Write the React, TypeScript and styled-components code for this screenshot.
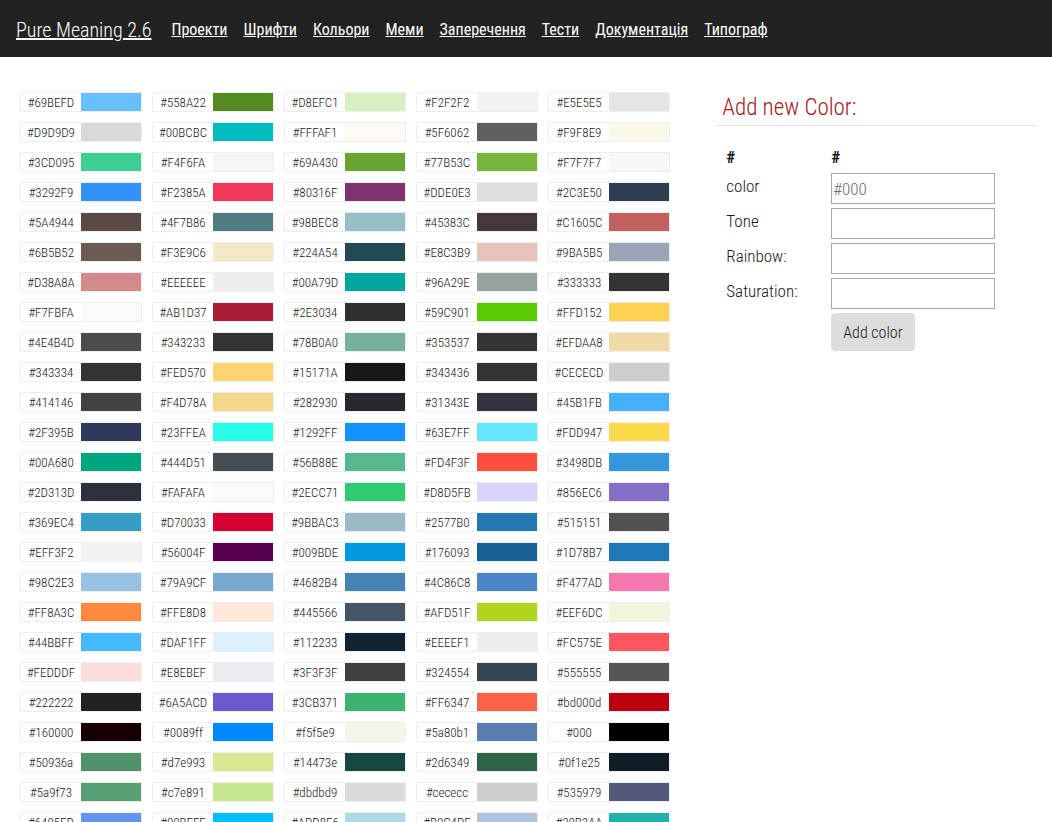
import React from 'react';
import styled, { createGlobalStyle } from 'styled-components';

const GlobalStyle = createGlobalStyle`
  *, *::before, *::after { box-sizing: border-box; }
  body {
    margin: 0;
    background: #fff;
    color: #16181b;
    font-family: "Roboto Condensed", Roboto, sans-serif;
    font-size: 16px;
    font-weight: 300;
    line-height: 24px;
  }
`;

const Navbar = styled.header`
  display: flex;
  align-items: center;
  flex-wrap: wrap;
  gap: 20px;
  padding: 10px 16px 7px;
  background: #222;
`;

const Brand = styled.a`
  padding: 5px 0;
  color: #fff;
  font-size: 20px;
  line-height: 30px;
`;

const NavLinks = styled.nav`
  display: flex;
  flex-wrap: wrap;
  gap: 16px;
`;

const NavLink = styled.a`
  color: #fff;
  font-weight: 400;
`;

const Page = styled.main`
  display: grid;
  grid-template-columns: 2fr 1fr;
  padding-top: 30px;
`;

const Palette = styled.ul`
  display: flex;
  flex-wrap: wrap;
  align-content: flex-start;
  margin: 0;
  padding: 0 15px;
  list-style: none;
`;

const ColorChip = styled.li`
  display: flex;
  width: 122px;
  height: 20px;
  margin: 5px;
  border: 1px solid #eee;
`;

const ChipCode = styled.span`
  flex: 1;
  font-size: 13px;
  line-height: 20px;
  text-align: center;
`;

const Swatch = styled.span<{ $color: string }>`
  width: 60px;
  background: ${(p) => p.$color};
`;

const Sidebar = styled.section`
  padding: 0 15px;
`;

const Heading = styled.h2`
  margin: 0 0 16px;
  padding: 6px 6px 2px;
  border-bottom: 1px solid #e5e5e5;
  color: #a02024;
  font-size: 23px;
  font-weight: 300;
  line-height: 30px;
`;

const FormTable = styled.table`
  margin-left: 7px;
  border-collapse: separate;
  border-spacing: 2px;
  font-size: 17px;
`;

const HeadCell = styled.th`
  padding: 1px;
  font-weight: 700;
  text-align: left;
`;

const LabelCell = styled.td`
  width: 103px;
  padding: 2px 1px 0;
  vertical-align: top;
`;

const FieldCell = styled.td`
  padding: 1px;
`;

const Field = styled.input`
  display: block;
  width: 164px;
  height: 31px;
  padding: 1px;
  border: 1px solid #a9a9a9;
  background: #fff;
  color: inherit;
  font: inherit;
  &::placeholder { color: #666; opacity: 1; }
`;

const SubmitButton = styled.button`
  display: block;
  padding: 7px 11px 5px;
  border: 1px solid #ddd;
  border-radius: 4px;
  background: #ddd;
  color: inherit;
  font: inherit;
  font-size: 16px;
`;

const links = ['Проекти', 'Шрифти', 'Кольори', 'Меми', 'Заперечення', 'Тести', 'Документація', 'Типограф'];

const colors = `
#69BEFD #558A22 #D8EFC1 #F2F2F2 #E5E5E5
#D9D9D9 #00BCBC #FFFAF1 #5F6062 #F9F8E9
#3CD095 #F4F6FA #69A430 #77B53C #F7F7F7
#3292F9 #F2385A #80316F #DDE0E3 #2C3E50
#5A4944 #4F7B86 #98BEC8 #45383C #C1605C
#6B5B52 #F3E9C6 #224A54 #E8C3B9 #9BA5B5
#D38A8A #EEEEEE #00A79D #96A29E #333333
#F7FBFA #AB1D37 #2E3034 #59C901 #FFD152
#4E4B4D #343233 #78B0A0 #353537 #EFDAA8
#343334 #FED570 #15171A #343436 #CECECD
#414146 #F4D78A #282930 #31343E #45B1FB
#2F395B #23FFEA #1292FF #63E7FF #FDD947
#00A680 #444D51 #56B88E #FD4F3F #3498DB
#2D313D #FAFAFA #2ECC71 #D8D5FB #856EC6
#369EC4 #D70033 #9BBAC3 #2577B0 #515151
#EFF3F2 #56004F #009BDE #176093 #1D78B7
#98C2E3 #79A9CF #4682B4 #4C86C8 #F477AD
#FF8A3C #FFE8D8 #445566 #AFD51F #EEF6DC
#44BBFF #DAF1FF #112233 #EEEEF1 #FC575E
#FEDDDF #E8EBEF #3F3F3F #324554 #555555
#222222 #6A5ACD #3CB371 #FF6347 #bd000d
#160000 #0089ff #f5f5e9 #5a80b1 #000
#50936a #d7e993 #14473e #2d6349 #0f1e25
#5a9f73 #c7e891 #dbdbd9 #cececc #535979
#6495ED #00BFFF #ADD8E6 #B0C4DE #20B2AA
`.trim().split(/\s+/);

const fields = [
  { id: 'color', label: 'color', placeholder: '#000' },
  { id: 'tone', label: 'Tone' },
  { id: 'rainbow', label: 'Rainbow:' },
  { id: 'saturation', label: 'Saturation:' },
];

export default function App() {
  return (
    <>
      <GlobalStyle />
      <Navbar>
        <Brand href="#">Pure Meaning 2.6</Brand>
        <NavLinks>
          {links.map((text) => (
            <NavLink key={text} href="#">{text}</NavLink>
          ))}
        </NavLinks>
      </Navbar>
      <Page>
        <Palette>
          {colors.map((color) => (
            <ColorChip key={color}>
              <ChipCode>{color}</ChipCode>
              <Swatch $color={color} />
            </ColorChip>
          ))}
        </Palette>
        <Sidebar>
          <Heading>Add new Color:</Heading>
          <form onSubmit={(e) => e.preventDefault()}>
            <FormTable>
              <thead>
                <tr>
                  <HeadCell>#</HeadCell>
                  <HeadCell>#</HeadCell>
                </tr>
              </thead>
              <tbody>
                {fields.map((f) => (
                  <tr key={f.id}>
                    <LabelCell><label htmlFor={f.id}>{f.label}</label></LabelCell>
                    <FieldCell><Field id={f.id} type="text" placeholder={f.placeholder} /></FieldCell>
                  </tr>
                ))}
                <tr>
                  <LabelCell />
                  <FieldCell><SubmitButton type="submit">Add color</SubmitButton></FieldCell>
                </tr>
              </tbody>
            </FormTable>
          </form>
        </Sidebar>
      </Page>
    </>
  );
}
